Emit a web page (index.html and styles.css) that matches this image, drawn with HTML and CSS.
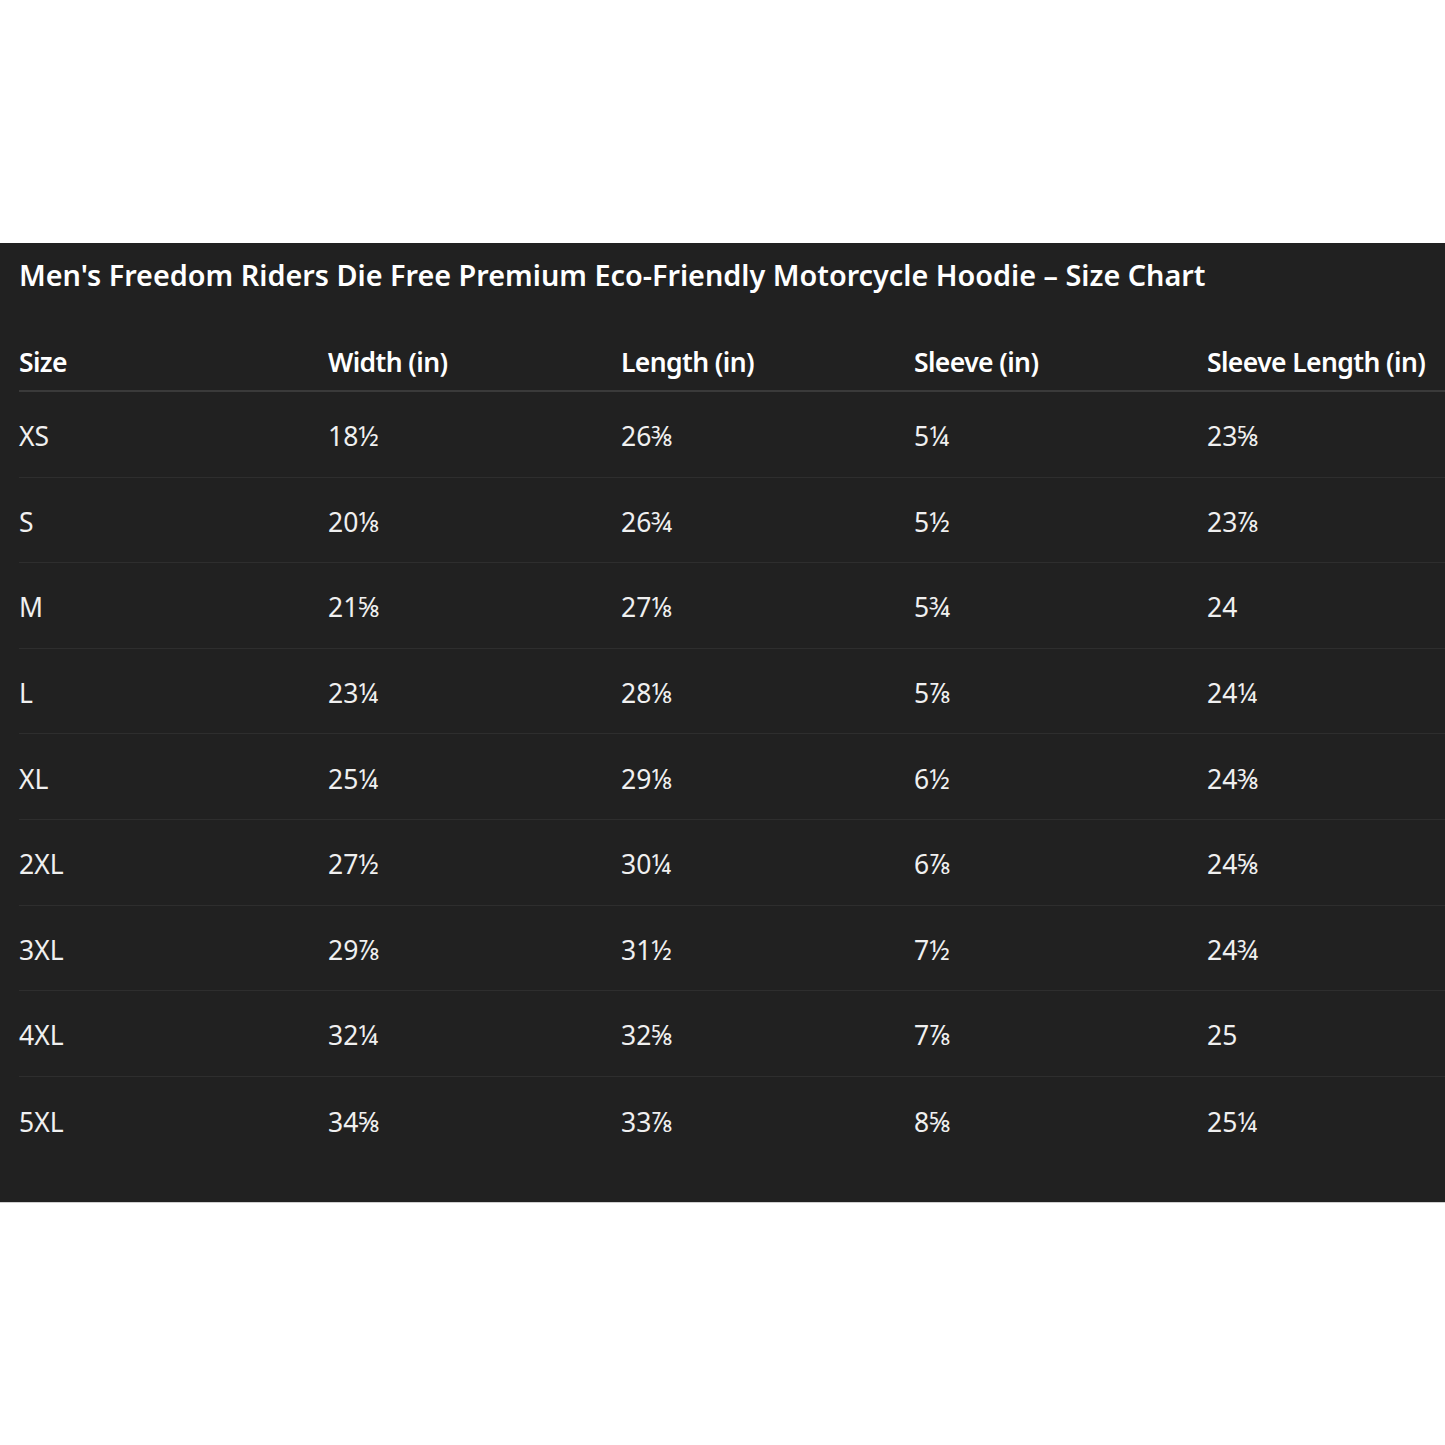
FILE: index.html
```html
<!DOCTYPE html>
<html lang="en">
<head>
<meta charset="utf-8">
<title>Size Chart</title>
<link rel="stylesheet" href="styles.css">
</head>
<body>
<div class="page">
  <section class="chart">
    <h1 class="chart-title">Men's Freedom Riders Die Free Premium Eco-Friendly Motorcycle Hoodie – Size Chart</h1>
    <div class="table">
      <div class="row head">
        <div>Size</div><div>Width (in)</div><div>Length (in)</div><div>Sleeve (in)</div><div>Sleeve Length (in)</div>
      </div>
      <div class="row"><div>XS</div><div>18½</div><div>26⅜</div><div>5¼</div><div>23⅝</div></div>
      <div class="row"><div>S</div><div>20⅛</div><div>26¾</div><div>5½</div><div>23⅞</div></div>
      <div class="row"><div>M</div><div>21⅝</div><div>27⅛</div><div>5¾</div><div>24</div></div>
      <div class="row"><div>L</div><div>23¼</div><div>28⅛</div><div>5⅞</div><div>24¼</div></div>
      <div class="row"><div>XL</div><div>25¼</div><div>29⅛</div><div>6½</div><div>24⅜</div></div>
      <div class="row"><div>2XL</div><div>27½</div><div>30¼</div><div>6⅞</div><div>24⅝</div></div>
      <div class="row"><div>3XL</div><div>29⅞</div><div>31½</div><div>7½</div><div>24¾</div></div>
      <div class="row"><div>4XL</div><div>32¼</div><div>32⅝</div><div>7⅞</div><div>25</div></div>
      <div class="row last"><div>5XL</div><div>34⅝</div><div>33⅞</div><div>8⅝</div><div>25¼</div></div>
    </div>
  </section>
</div>
</body>
</html>
```

FILE: styles.css
```css
html, body {
  margin: 0;
  padding: 0;
  background: #ffffff;
}
body {
  font-family: "Noto Sans", "Open Sans", "DejaVu Sans", sans-serif;
  color: #f0f0f0;
}
.page {
  padding-top: 243px;
}
.chart {
  background: #212121;
  height: 960px;
  box-sizing: border-box;
  padding: 12px 0 0 19px;
  overflow: hidden;
  border-bottom: 1px solid #cfcfcf;
}
.chart-title {
  margin: 0;
  font-size: 28.8px;
  font-weight: 600;
  line-height: 40px;
  color: #ffffff;
  white-space: nowrap;
}
.table {
  margin-top: 38px;
}
.row {
  display: grid;
  grid-template-columns: 309px 293px 293px 293px 260px;
  align-items: center;
  height: 85.6px;
  padding-top: 4px;
  box-sizing: border-box;
  border-bottom: 1px solid #2e2e2e;
  font-size: 26.5px;
}
.row.head {
  height: 59px;
  padding-top: 0;
  font-weight: 600;
  color: #ffffff;
  letter-spacing: -0.6px;
  border-bottom: 2px solid #3a3a3a;
}
.row.last {
  border-bottom: none;
}
```
